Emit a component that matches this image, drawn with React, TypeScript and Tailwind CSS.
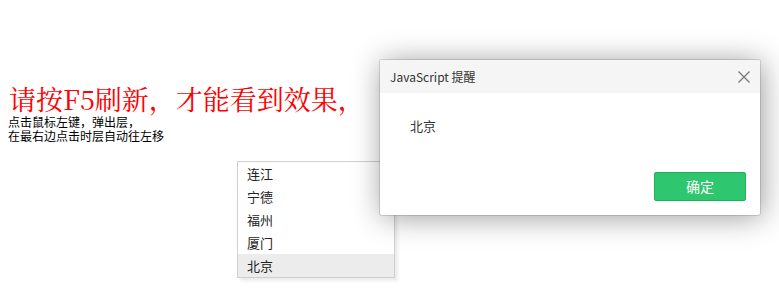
const cities = ['连江', '宁德', '福州', '厦门', '北京'];

function CityList() {
  return (
    <ul className="absolute left-[237px] top-[161px] w-[158px] border border-[#cfcfcf] bg-white shadow-[3px_3px_3px_rgba(0,0,0,0.08)]">
      {cities.map((c) => (
        <li
          key={c}
          className={`h-[23px] pl-[9px] text-[13px] leading-[23px] text-[#222] ${c === '北京' ? 'bg-[#ececec]' : ''}`}
        >
          {c}
        </li>
      ))}
    </ul>
  );
}

function AlertDialog() {
  return (
    <div className="absolute left-[380px] top-[60px] z-10 flex h-[155px] w-[380px] flex-col rounded-[2px] bg-white shadow-[0_0_0_1px_rgba(0,0,0,0.12),2px_2px_30px_rgba(0,0,0,0.4)]">
      <div className="flex h-[33px] items-center justify-between rounded-t-[2px] bg-[#f5f5f5] pl-[10px] pr-[10px]">
        <span className="text-[12px] text-[#333]">JavaScript 提醒</span>
        <svg width="12" height="12" viewBox="0 0 12 12" className="text-[#7a7a7a]">
          <path d="M0.5 0.5 L11.5 11.5 M11.5 0.5 L0.5 11.5" stroke="currentColor" strokeWidth="1.3" fill="none" />
        </svg>
      </div>
      <div className="flex-1 pl-[30px] pt-[21px] text-[13px] leading-[24px] text-[#333]">北京</div>
      <div className="flex justify-end pb-[14px] pr-[14px]">
        <button className="h-[29px] w-[92px] rounded-[2px] border border-[#1fb05c] bg-[#2ec66f] text-[14px] text-white">
          确定
        </button>
      </div>
    </div>
  );
}

export default function App() {
  return (
    <div
      className="relative h-[301px] w-[779px] overflow-hidden bg-white"
      style={{ fontFamily: '"Noto Sans CJK SC", "Noto Sans", sans-serif' }}
    >
      <div className="pl-[8px] pt-[85px]">
        <div
          className="ml-[1px] h-[28px] whitespace-nowrap text-[27px] leading-[28px] text-[#ff0000]"
          style={{ fontFamily: '"Noto Serif CJK SC", "Liberation Serif", "Noto Sans CJK SC", serif' }}
        >
          请按F5刷新，才能看到效果，
        </div>
        <div className="mt-[2px] text-[12px] leading-[14px] text-black">
          <div>点击鼠标左键，弹出层，</div>
          <div>在最右边点击时层自动往左移</div>
        </div>
      </div>
      <CityList />
      <AlertDialog />
    </div>
  );
}
